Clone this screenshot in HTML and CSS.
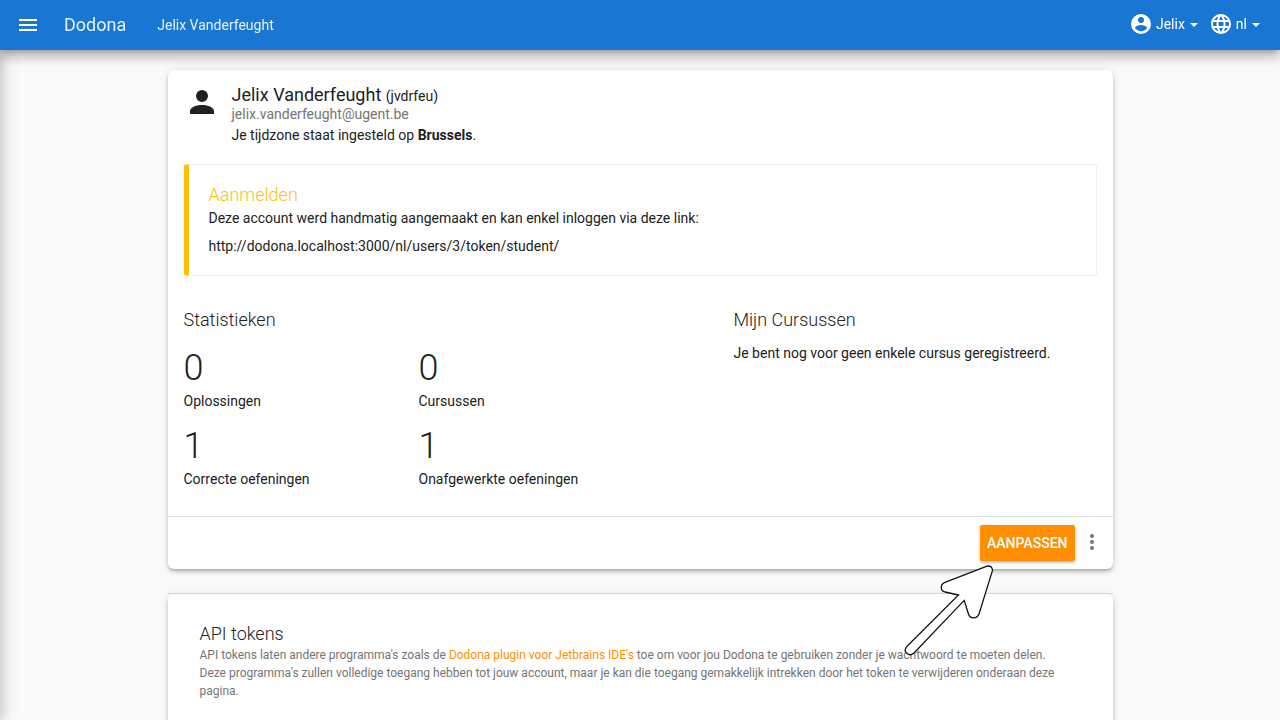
FILE: index.html
```html
<!DOCTYPE html>
<html lang="nl">
<head>
<meta charset="utf-8">
<meta name="viewport" content="width=device-width, initial-scale=1">
<title>Jelix Vanderfeught - Dodona</title>
<link rel="stylesheet" href="styles.css">
</head>
<body>
<header class="navbar">
  <button class="nav-button menu-button" type="button" aria-label="Menu">
    <svg class="icon" viewBox="0 0 24 24"><path d="M3 6h18v2H3V6m0 5h18v2H3v-2m0 5h18v2H3v-2z"/></svg>
  </button>
  <a class="brand" href="#">Dodona</a>
  <a class="crumb" href="#">Jelix Vanderfeught</a>
  <nav class="nav-right">
    <button class="nav-button" type="button">
      <svg class="icon" viewBox="0 0 24 24"><path fill-rule="evenodd" d="M12 2a10 10 0 1 0 0 20 10 10 0 0 0 0-20zm0 3a3 3 0 1 1 0 6 3 3 0 0 1 0-6zm0 14.200c-2.500 0-4.710-1.280-6-3.220.03-1.990 4-3.080 6-3.080s5.970 1.090 6 3.080a7.200 7.200 0 0 1-6 3.220z"/></svg>
      <span>Jelix</span><span class="caret"></span>
    </button>
    <button class="nav-button" type="button">
      <svg class="icon" viewBox="0 0 24 24"><path d="M16.360 14c.08-.66.14-1.320.14-2s-.06-1.340-.14-2h3.380c.16.640.26 1.310.26 2s-.1 1.360-.26 2m-5.150 5.560c.6-1.110 1.060-2.310 1.380-3.560h2.950a8.030 8.030 0 0 1-4.330 3.560M14.340 14H9.660c-.1-.66-.16-1.320-.16-2s.06-1.350.16-2h4.680c.09.650.16 1.320.16 2s-.07 1.340-.16 2M12 19.960c-.83-1.200-1.500-2.530-1.910-3.960h3.820c-.41 1.430-1.080 2.760-1.910 3.960M8 8H5.080A7.920 7.920 0 0 1 9.400 4.440C8.800 5.550 8.350 6.750 8 8m-2.920 8H8c.35 1.250.8 2.450 1.400 3.560A8 8 0 0 1 5.080 16m-.82-2C4.100 13.360 4 12.690 4 12s.1-1.360.26-2h3.380c-.08.660-.14 1.320-.14 2s.06 1.340.14 2M12 4.030c.83 1.200 1.500 2.540 1.910 3.970h-3.820c.41-1.430 1.080-2.770 1.910-3.970M18.920 8h-2.950a15.650 15.650 0 0 0-1.380-3.560c1.840.63 3.370 1.900 4.330 3.560M12 2C6.470 2 2 6.500 2 12a10 10 0 1 0 10-10z"/></svg>
      <span>nl</span><span class="caret"></span>
    </button>
  </nav>
</header>
<aside class="drawer" aria-hidden="true"></aside>
<main class="container">
  <section class="card">
    <div class="card-body">
      <div class="profile">
        <svg class="avatar" viewBox="0 0 24 24"><path d="M12 4a4 4 0 1 1 0 8 4 4 0 0 1 0-8m0 10c4.420 0 8 1.790 8 4v2H4v-2c0-2.210 3.580-4 8-4z"/></svg>
        <div>
          <h1 class="heading name">Jelix Vanderfeught <small class="username">(jvdrfeu)</small></h1>
          <p class="email">jelix.vanderfeught@ugent.be</p>
          <p class="timezone">Je tijdzone staat ingesteld op <b>Brussels</b>.</p>
        </div>
      </div>
      <div class="callout">
        <h2 class="heading callout-title">Aanmelden</h2>
        <p>Deze account werd handmatig aangemaakt en kan enkel inloggen via deze link:</p>
        <p class="token-link">http://dodona.localhost:3000/nl/users/3/token/student/</p>
      </div>
      <div class="columns">
        <section>
          <h2 class="heading light">Statistieken</h2>
          <div class="stats">
            <div><div class="number">0</div><p>Oplossingen</p></div>
            <div><div class="number">0</div><p>Cursussen</p></div>
            <div><div class="number">1</div><p>Correcte oefeningen</p></div>
            <div><div class="number">1</div><p>Onafgewerkte oefeningen</p></div>
          </div>
        </section>
        <section>
          <h2 class="heading light">Mijn Cursussen</h2>
          <p class="courses">Je bent nog voor geen enkele cursus geregistreerd.</p>
        </section>
      </div>
    </div>
    <div class="card-actions">
      <div class="edit">
        <button class="primary-button" type="button">Aanpassen</button>
        <svg class="pointer" viewBox="0 0 92 94"><path d="M88.200 7.400C89 4 87 1.400 83 2.100L41 18.300C36 20.500 36 26.500 41 28L54.500 31 2.600 82.800C-1.400 87.500 4.800 93.500 10 89L60.200 36.400 64.300 49.500C66 55.500 73 55 75 50Z"/></svg>
      </div>
      <button class="more-button" type="button" aria-label="Meer">
        <svg class="icon" viewBox="0 0 24 24"><path d="M12 16a2 2 0 1 1 0 4 2 2 0 0 1 0-4m0-6a2 2 0 1 1 0 4 2 2 0 0 1 0-4m0-6a2 2 0 1 1 0 4 2 2 0 0 1 0-4z"/></svg>
      </button>
    </div>
  </section>
  <hr class="divider">
  <section class="card tokens">
    <h2 class="heading light">API tokens</h2>
    <p class="help">API tokens laten andere programma's zoals de <a href="#">Dodona plugin voor Jetbrains IDE's</a> toe om voor jou Dodona te gebruiken zonder je wachtwoord te moeten delen. Deze programma's zullen volledige toegang hebben tot jouw account, maar je kan die toegang gemakkelijk intrekken door het token te verwijderen onderaan deze pagina.</p>
  </section>
</main>
</body>
</html>
```
FILE: styles.css
```css
* { box-sizing: border-box; }
html { overflow: hidden; height: 100%; }
body {
  margin: 0;
  height: 100%;
  overflow: hidden;
  background: #fafafa;
  color: #212121;
  font: 14px/20px Roboto, sans-serif;
}
p, h1, h2 { margin: 0; }
a { color: #ff8f00; text-decoration: none; }
button { border: 0; padding: 0; background: none; font: inherit; color: inherit; cursor: pointer; }
.icon { display: block; width: 24px; height: 24px; fill: currentColor; }

.navbar {
  position: relative;
  z-index: 2;
  display: flex;
  align-items: center;
  height: 50px;
  padding: 0 20px 0 16px;
  background: #1976d2;
  color: #fff;
  box-shadow: 0 5px 5px -3px rgba(0,0,0,.2), 0 8px 10px 1px rgba(0,0,0,.14), 0 3px 14px 2px rgba(0,0,0,.12);
}
.navbar a { color: rgba(255,255,255,.9); }
.brand { margin-left: 24px; font-size: 18px; }
.crumb { margin-left: 31px; }
.nav-right { display: flex; gap: 11px; margin-left: auto; padding-bottom: 2px; }
.nav-button { display: flex; align-items: center; gap: 3px; }
.nav-right .nav-button { color: #fff; }
.caret { margin: 2px 0 0 2px; border: 4px solid transparent; border-top-color: currentColor; border-bottom: 0; }

.drawer {
  position: fixed;
  z-index: 1;
  top: 0;
  bottom: 0;
  left: -280px;
  width: 280px;
  box-shadow: 0 0 12px 2px rgba(0,0,0,.14), 0 0 20px 2px rgba(0,0,0,.12);
}

.container { max-width: 945px; margin: 20px auto 0; }
.card {
  border-radius: 6px;
  background: #fff;
  box-shadow: 0 3px 4px rgba(0,0,0,.14), 0 3px 3px -2px rgba(0,0,0,.2), 0 1px 8px rgba(0,0,0,.12);
}
.card-body { padding: 14px 16px 27px; }
.heading { font-size: 18px; line-height: 20px; font-weight: 400; }
.heading.light { font-weight: 300; }

.profile { display: flex; gap: 12px; }
.avatar { width: 36px; height: 36px; fill: #212121; }
.name { margin-top: 1px; }
.username { font-size: 14px; line-height: 1; }
.email { color: #757575; line-height: 18px; }
.timezone { margin-top: 2px; }

.callout {
  margin: 19px 0 34px;
  padding: 20px 20px 19px;
  border: 1px solid #eee;
  border-left: 5px solid #ffc107;
  border-radius: 3px;
}
.heading.callout-title { margin-bottom: 3px; color: #ffc107; font-weight: 300; }
.token-link { margin-top: 8px; }

.columns { display: grid; grid-template-columns: 520fr 363fr; gap: 30px; }
.stats { display: grid; grid-template-columns: repeat(2, 220px); gap: 15px; margin-top: 18px; }
.number { margin-bottom: 3px; font-size: 36px; line-height: 40px; font-weight: 300; }
.courses { margin-top: 13px; }

.card-actions {
  display: flex;
  justify-content: flex-end;
  align-items: center;
  gap: 5px;
  padding: 8px 9px 8px 8px;
  border-top: 1px solid #e0e0e0;
}
.edit { position: relative; }
.primary-button {
  display: block;
  height: 36px;
  padding: 0 7px;
  border-radius: 2px;
  background: #ff8f00;
  color: #fff;
  font-weight: 500;
  text-transform: uppercase;
  box-shadow: 0 2px 2px rgba(0,0,0,.14), 0 1px 4px rgba(0,0,0,.16);
}
.more-button { padding-bottom: 2px; color: #757575; }
.pointer {
  position: absolute;
  z-index: 1;
  top: 39px;
  right: 79px;
  width: 92px;
  height: 94px;
  fill: #fff;
  stroke: #111;
  stroke-width: 1.3;
  pointer-events: none;
}

.divider { height: 1px; margin: 24px 0 0; border: 0; background: #e0e0e0; }
.tokens { padding: 30px 48px 48px 32px; }
.help { margin-top: 2px; color: #757575; font-size: 12px; line-height: 18px; }
```
